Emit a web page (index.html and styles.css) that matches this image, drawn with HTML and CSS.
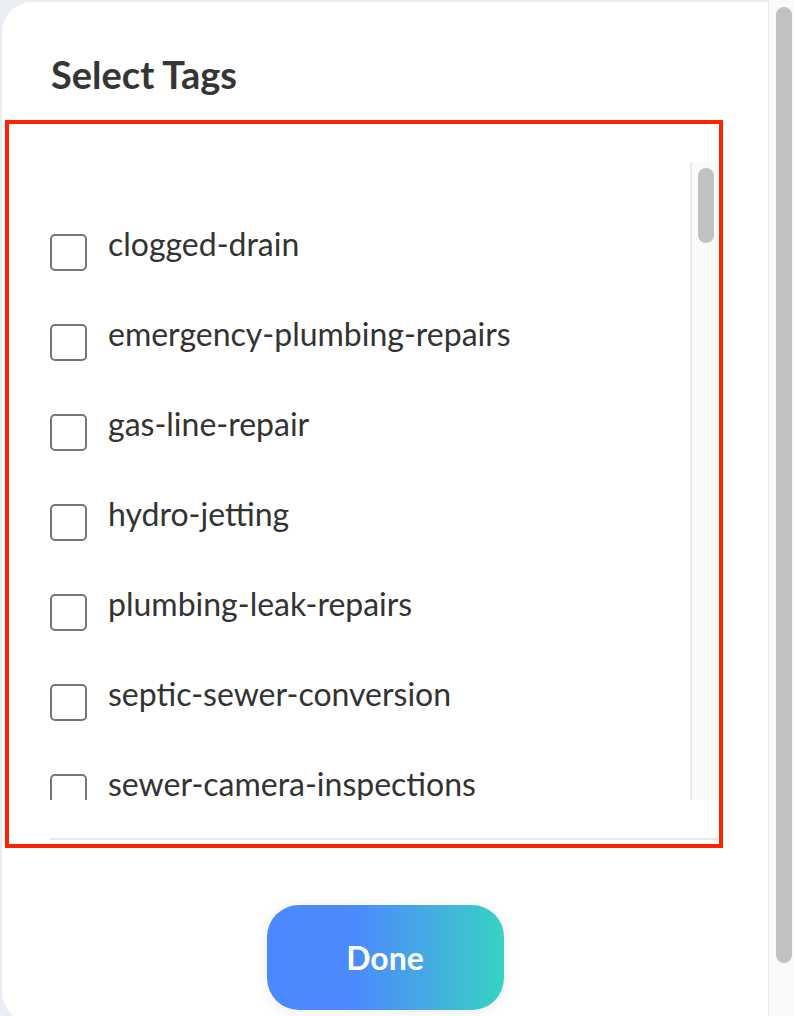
FILE: index.html
```html
<!DOCTYPE html>
<html lang="en">
<head>
<meta charset="utf-8">
<title>Select Tags</title>
<link rel="stylesheet" href="styles.css">
</head>
<body>
<div class="viewport">
  <div class="page">
    <div class="modal">
      <h2 class="title">Select Tags</h2>
      <div class="highlight">
        <div class="list-wrap">
          <div class="list">
            <label class="row"><span class="box"></span><span class="label">clogged-drain</span></label>
            <label class="row"><span class="box"></span><span class="label">emergency-plumbing-repairs</span></label>
            <label class="row"><span class="box"></span><span class="label">gas-line-repair</span></label>
            <label class="row"><span class="box"></span><span class="label">hydro-jetting</span></label>
            <label class="row"><span class="box"></span><span class="label">plumbing-leak-repairs</span></label>
            <label class="row"><span class="box"></span><span class="label">septic-sewer-conversion</span></label>
            <label class="row"><span class="box"></span><span class="label">sewer-camera-inspections</span></label>
            <label class="row"><span class="box"></span><span class="label">water-heater-repair</span></label>
          </div>
          <div class="scrollbar"><div class="thumb"></div></div>
        </div>
        <div class="divider"></div>
      </div>
      <div class="actions"><button class="done" type="button">Done</button></div>
    </div>
  </div>
  <div class="page-scrollbar"><div class="page-thumb"></div></div>
</div>
</body>
</html>
```

FILE: styles.css
```css
html, body {
  margin: 0;
  padding: 0;
  height: 100%;
  overflow: hidden;
}

body {
  background: #e9edf4;
  font-family: Lato, "Noto Sans", sans-serif;
  color: #333333;
}

.viewport {
  display: flex;
  height: 1016px;
}

.page {
  width: 768px;
  padding: 2px 0 0 2px;
  box-sizing: border-box;
  overflow: hidden;
}

.modal {
  background: #ffffff;
  height: 1020px;
  border-radius: 30px 0 0 30px;
  padding-top: 48px;
  box-sizing: border-box;
}

.title {
  margin: 0 0 22px 49px;
  font-size: 38px;
  line-height: 48px;
  font-weight: 700;
  color: #353535;
}

.highlight {
  margin-left: 3px;
  width: 718px;
  box-sizing: border-box;
  border: 4px solid #ff2200;
}

.list-wrap {
  margin-top: 38px;
  height: 638px;
  display: flex;
  overflow: hidden;
}

.list {
  flex: 1;
  padding: 45px 0 0 41px;
  display: flex;
  flex-direction: column;
}

.row {
  height: 90px;
  flex: none;
  display: flex;
  align-items: center;
}

.box {
  width: 37px;
  height: 37px;
  box-sizing: border-box;
  border: 2px solid #767676;
  border-radius: 5px;
  margin-right: 21px;
  flex: none;
}

.label {
  font-size: 32px;
  color: #333333;
  position: relative;
  top: -9px;
}

.scrollbar {
  width: 28px;
  margin-right: 1px;
  background: #fafafa;
  border-left: 2px solid #ebebeb;
  box-sizing: border-box;
  padding: 6px 0 0 6px;
}

.thumb {
  width: 16px;
  height: 75px;
  border-radius: 8px;
  background: #c1c1c1;
}

.divider {
  margin: 38px 1px 4px 41px;
  height: 2px;
  background: #e8e8e8;
}

.actions {
  display: flex;
  justify-content: center;
  margin-top: 57px;
}

.done {
  width: 237px;
  height: 105px;
  border: none;
  border-radius: 32px;
  background: linear-gradient(90deg, #4a88ff 0%, #4b8bfd 38%, #44aee0 70%, #36d3c2 100%);
  color: #ffffff;
  font-family: Lato, "Noto Sans", sans-serif;
  font-weight: 700;
  font-size: 32px;
  box-shadow: 0 2px 14px rgba(0, 0, 0, 0.08);
  cursor: pointer;
}

.page-scrollbar {
  width: 26px;
  background: #fafafa;
  border-left: 1px solid #e7e7e7;
  box-sizing: border-box;
  padding: 7px 0 0 7px;
}

.page-thumb {
  width: 16px;
  height: 956px;
  border-radius: 8px;
  background: #c1c1c1;
}
```
